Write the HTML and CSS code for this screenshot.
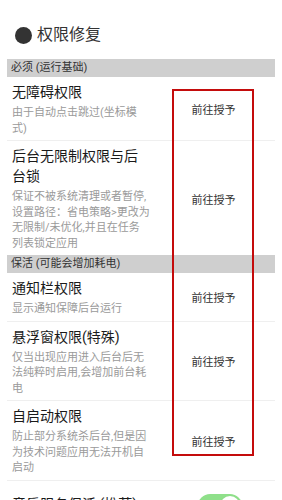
FILE: index.html
```html
<!DOCTYPE html>
<html lang="zh-CN">
<head>
    <meta charset="UTF-8">
    <meta name="viewport" content="width=device-width, initial-scale=1.0">
    <title>权限修复</title>
    <link rel="stylesheet" href="styles.css">
</head>
<body>
    <div class="page">
        <h1 class="title"><span class="dot"></span>权限修复</h1>

        <div class="section">必须 (运行基础)</div>
        <div class="row">
            <div class="info">
                <div class="name">无障碍权限</div>
                <div class="desc">由于自动点击跳过(坐标模<br>式)</div>
            </div>
            <div class="action">前往授予</div>
        </div>
        <div class="row">
            <div class="info">
                <div class="name">后台无限制权限与后<br>台锁</div>
                <div class="desc">保证不被系统清理或者暂停,<br>设置路径：省电策略&gt;更改为<br>无限制/未优化,并且在任务<br>列表锁定应用</div>
            </div>
            <div class="action">前往授予</div>
        </div>

        <div class="section">保活 (可能会增加耗电)</div>
        <div class="row">
            <div class="info">
                <div class="name">通知栏权限</div>
                <div class="desc">显示通知保障后台运行</div>
            </div>
            <div class="action">前往授予</div>
        </div>
        <div class="row">
            <div class="info">
                <div class="name">悬浮窗权限(特殊)</div>
                <div class="desc">仅当出现应用进入后台后无<br>法纯粹时启用,会增加前台耗<br>电</div>
            </div>
            <div class="action">前往授予</div>
        </div>
        <div class="row">
            <div class="info">
                <div class="name">自启动权限</div>
                <div class="desc">防止部分系统杀后台,但是因<br>为技术问题应用无法开机自<br>启动</div>
            </div>
            <div class="action">前往授予</div>
        </div>
        <div class="row switch-row">
            <div class="info">
                <div class="name">音乐服务保活 (推荐)</div>
            </div>
            <div class="action"><span class="switch"></span></div>
        </div>

        <!-- 标注框 -->
        <div class="frame"></div>
    </div>
</body>
</html>
```

FILE: styles.css
```css
* {
    box-sizing: border-box;
    margin: 0;
    padding: 0;
}

body {
    font-family: Roboto, "Noto Sans CJK SC", sans-serif;
    background-color: #fff;
    color: #222;
    overflow: hidden;
}

.page {
    position: relative;
    margin: 0 7px;
}

.title {
    display: flex;
    align-items: center;
    padding: 23px 0 0 8px;
    margin-bottom: 12px;
    font-size: 16px;
    font-weight: normal;
    line-height: 24px;
    color: #333;
}

.dot {
    width: 17px;
    height: 17px;
    border-radius: 50%;
    background-color: #333;
    margin-right: 5px;
}

.section {
    height: 18px;
    padding-left: 4px;
    background-color: #cfcfcf;
    font-size: 11px;
    line-height: 18px;
    color: #333;
}

.row {
    display: flex;
    padding: 5px 0 4px 5px;
}

.row + .row {
    border-top: 1px solid #efefef;
}

.info {
    width: 140px;
}

.name {
    font-size: 14px;
    line-height: 20px;
    color: #1a1a1a;
}

.desc {
    margin-top: 3px;
    font-size: 11px;
    line-height: 15.5px;
    color: #9a9a9a;
}

.action {
    flex: 1;
    display: flex;
    align-items: center;
    justify-content: center;
    font-size: 11px;
    color: #333;
}

.switch-row {
    padding-top: 13px;
}

.switch-row .action {
    align-items: flex-start;
    padding-left: 12px;
}

.switch {
    position: relative;
    width: 44px;
    height: 24px;
    border-radius: 12px;
    background-color: #8fe08a;
}

.switch::after {
    content: "";
    position: absolute;
    top: 2px;
    right: 2px;
    width: 20px;
    height: 20px;
    border-radius: 50%;
    background-color: #fff;
    box-shadow: 0 1px 2px rgba(0,0,0,0.15);
}

.frame {
    position: absolute;
    left: 165px;
    top: 89px;
    width: 82px;
    height: 367px;
    border: 2px solid #c40c0c;
}
```
